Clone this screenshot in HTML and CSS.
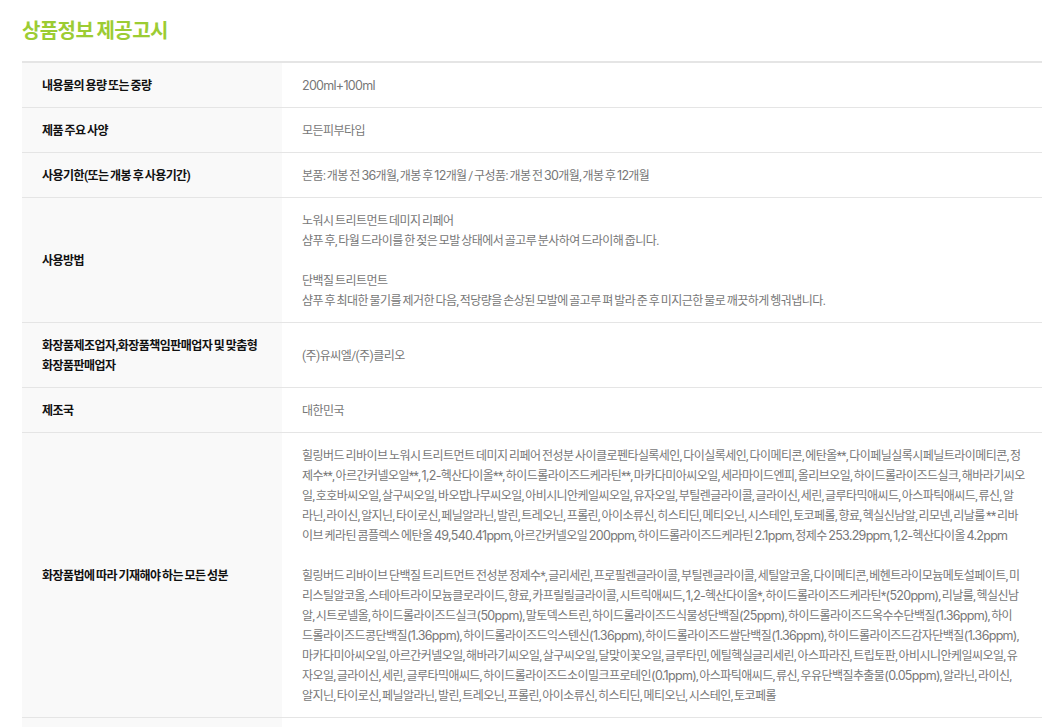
FILE: index.html
```html
<!DOCTYPE html>
<html lang="ko">
<head>
<meta charset="utf-8">
<title>상품정보 제공고시</title>
<link rel="stylesheet" href="styles.css">
</head>
<body>
<main class="notice">
<h2 class="notice-title">상품정보 제공고시</h2>
<table class="notice-table">
<tbody>
<tr><th>내용물의 용량 또는 중량</th><td><span class="en">200ml+100ml</span></td></tr>
<tr><th>제품 주요 사양</th><td>모든피부타입</td></tr>
<tr><th>사용기한(또는 개봉 후 사용기간)</th><td>본품: 개봉 전 <span class="en">36</span>개월, 개봉 후 <span class="en">12</span>개월 / 구성품: 개봉 전 <span class="en">30</span>개월, 개봉 후 <span class="en">12</span>개월</td></tr>
<tr><th>사용방법</th><td>노워시 트리트먼트 데미지 리페어<br>샴푸 후, 타월 드라이를 한 젖은 모발 상태에서 골고루 분사하여 드라이해 줍니다.<br><br>단백질 트리트먼트<br>샴푸 후 최대한 물기를 제거한 다음, 적당량을 손상된 모발에 골고루 펴 발라 준 후 미지근한 물로 깨끗하게 헹궈냅니다.</td></tr>
<tr><th>화장품제조업자,화장품책임판매업자 및 맞춤형<br>화장품판매업자</th><td>(주)유씨엘/(주)클리오</td></tr>
<tr><th>제조국</th><td>대한민국</td></tr>
<tr><th>화장품법에 따라 기재해야 하는 모든 성분</th><td>힐링버드 리바이브 노워시 트리트먼트 데미지 리페어 전성분 사이클로펜타실록세인, 다이실록세인, 다이메티콘, 에탄올**, 다이페닐실록시페닐트라이메티콘, 정<br>제수**, 아르간커넬오일**, <span class="en">1,2-</span>헥산다이올**, 하이드롤라이즈드케라틴**, 마카다미아씨오일, 세라마이드엔피, 올리브오일, 하이드롤라이즈드실크, 해바라기씨오<br>일, 호호바씨오일, 살구씨오일, 바오밥나무씨오일, 아비시니안케일씨오일, 유자오일, 부틸렌글라이콜, 글라이신, 세린, 글루타믹애씨드, 아스파틱애씨드, 류신, 알<br>라닌, 라이신, 알지닌, 타이로신, 페닐알라닌, 발린, 트레오닌, 프롤린, 아이소류신, 히스티딘, 메티오닌, 시스테인, 토코페롤, 향료, 헥실신남알, 리모넨, 리날룰 ** 리바<br>이브 케라틴 콤플렉스 에탄올 <span class="en">49,540.41ppm</span>, 아르간커넬오일 <span class="en">200ppm</span>, 하이드롤라이즈드케라틴 <span class="en">2.1ppm</span>, 정제수 <span class="en">253.29ppm</span>, <span class="en">1,2-</span>헥산다이올 <span class="en">4.2ppm</span><br><br>힐링버드 리바이브 단백질 트리트먼트 전성분 정제수*, 글리세린, 프로필렌글라이콜, 부틸렌글라이콜, 세틸알코올, 다이메티콘, 베헨트라이모늄메토설페이트, 미<br>리스틸알코올, 스테아트라이모늄클로라이드, 향료, 카프릴릴글라이콜, 시트릭애씨드, <span class="en">1,2-</span>헥산다이올*, 하이드롤라이즈드케라틴*<span class="en">(520ppm)</span>, 리날룰, 헥실신남<br>알, 시트로넬올, 하이드롤라이즈드실크<span class="en">(50ppm)</span>, 말토덱스트린, 하이드롤라이즈드식물성단백질<span class="en">(25ppm)</span>, 하이드롤라이즈드옥수수단백질<span class="en">(1.36ppm)</span>, 하이<br>드롤라이즈드콩단백질<span class="en">(1.36ppm)</span>, 하이드롤라이즈드익스텐신<span class="en">(1.36ppm)</span>, 하이드롤라이즈드쌀단백질<span class="en">(1.36ppm)</span>, 하이드롤라이즈드감자단백질<span class="en">(1.36ppm)</span>,<br>마카다미아씨오일, 아르간커넬오일, 해바라기씨오일, 살구씨오일, 달맞이꽃오일, 글루타민, 에틸헥실글리세린, 아스파라진, 트립토판, 아비시니안케일씨오일, 유<br>자오일, 글라이신, 세린, 글루타믹애씨드, 하이드롤라이즈드소이밀크프로테인<span class="en">(0.1ppm)</span>, 아스파틱애씨드, 류신, 우유단백질추출물<span class="en">(0.05ppm)</span>, 알라닌, 라이신,<br>알지닌, 타이로신, 페닐알라닌, 발린, 트레오닌, 프롤린, 아이소류신, 히스티딘, 메티오닌, 시스테인, 토코페롤</td></tr>
<tr><th>&nbsp;</th><td>&nbsp;</td></tr>
</tbody>
</table>
</main>
</body>
</html>
```
FILE: styles.css
```css
html, body { margin: 0; padding: 0; background: #fff; overflow: hidden; height: 727px; }
body { font-family: Roboto, "Noto Sans CJK KR", sans-serif; }
.notice { width: 1020px; margin-left: 22px; }
.notice-title { margin: 0; padding-top: 16px; height: 46px; box-sizing: border-box; font-size: 20px; line-height: 30px; font-weight: 700; color: #9ccc33; letter-spacing: -0.6px; word-spacing: -1px; }
.notice-table { width: 1020px; table-layout: fixed; border-collapse: collapse; border-top: 2px solid #e5e5e5; margin-top: 15px; }
.notice-table th, .notice-table td { border-bottom: 1px solid #e5e5e5; padding: 13px 20px 11px; font-size: 12px; line-height: 20px; letter-spacing: -0.55px; word-spacing: -0.9px; vertical-align: middle; text-align: left; }
.notice-table th { width: 220px; background: #f9f9f9; color: #111; font-weight: 700; }
.notice-table td { color: #777; white-space: nowrap; font-weight: 400; }
.en { font-family: Inter, "Noto Sans CJK KR", sans-serif; font-size: 12.5px; letter-spacing: -0.7px; }
```
